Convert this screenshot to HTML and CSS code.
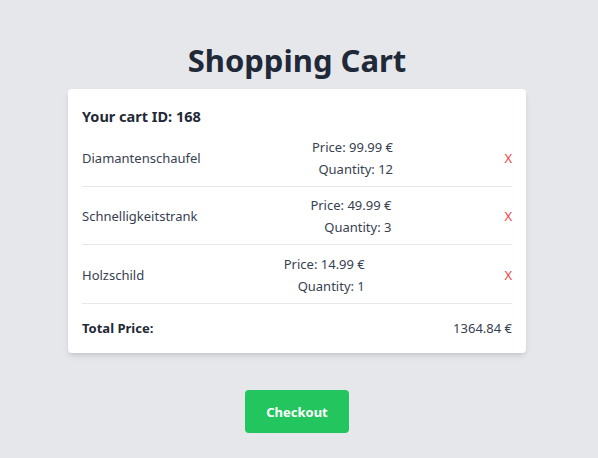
FILE: index.html
```html
<!DOCTYPE html>
<html lang="en">
<head>
<meta charset="utf-8">
<title>Shopping Cart</title>
<link rel="stylesheet" href="styles.css">
</head>
<body>
<main class="page">
  <h1 class="title">Shopping Cart</h1>
  <section class="card">
    <h2 class="cart-id">Your cart ID: 168</h2>
    <ul class="items">
      <li class="item">
        <span class="item-name">Diamantenschaufel</span>
        <div class="item-meta">
          <div>Price: 99.99 €</div>
          <div>Quantity: 12</div>
        </div>
        <button class="remove">X</button>
      </li>
      <li class="item">
        <span class="item-name">Schnelligkeitstrank</span>
        <div class="item-meta">
          <div>Price: 49.99 €</div>
          <div>Quantity: 3</div>
        </div>
        <button class="remove">X</button>
      </li>
      <li class="item">
        <span class="item-name">Holzschild</span>
        <div class="item-meta">
          <div>Price: 14.99 €</div>
          <div>Quantity: 1</div>
        </div>
        <button class="remove">X</button>
      </li>
    </ul>
    <div class="total">
      <span class="total-label">Total Price:</span>
      <span class="total-value">1364.84 €</span>
    </div>
  </section>
  <button class="checkout">Checkout</button>
</main>
</body>
</html>
```

FILE: styles.css
```css
* { box-sizing: border-box; }
html, body { margin: 0; padding: 0; }
body {
  background: #e5e7eb;
  font-family: "Noto Sans", "Open Sans", sans-serif;
  color: #374151;
  font-size: 13px;
}
.page {
  display: flex;
  flex-direction: column;
  align-items: center;
  padding: 40px 4px 0 0;
}
.title {
  margin: 0;
  font-size: 31px;
  line-height: 40px;
  font-weight: 700;
  color: #1f2937;
}
.card {
  margin-top: 9px;
  width: 458px;
  background: #fff;
  border-radius: 4px;
  box-shadow: 0 4px 6px -1px rgba(0,0,0,0.1), 0 2px 4px -2px rgba(0,0,0,0.1);
  padding: 14px;
}
.cart-id {
  margin: 0;
  font-size: 14.5px;
  line-height: 26px;
  font-weight: 700;
  color: #1f2937;
}
.items {
  list-style: none;
  margin: 0;
  padding: 0;
}
.item {
  display: flex;
  justify-content: space-between;
  align-items: center;
  padding: 7px 0 6px;
  border-bottom: 1px solid #e5e7eb;
}
.item:last-child { padding: 8px 0 6px; }
.item-name { line-height: 22px; }
.item-meta {
  text-align: right;
  line-height: 22px;
}
.remove {
  border: 0;
  background: none;
  padding: 0;
  font: inherit;
  color: #ef4444;
  cursor: pointer;
}
.total {
  display: flex;
  justify-content: space-between;
  align-items: center;
  padding-top: 13px;
  line-height: 22px;
}
.total-label { font-weight: 700; color: #1f2937; }
.checkout {
  margin-top: 37px;
  background: #22c55e;
  color: #fff;
  border: 0;
  border-radius: 4px;
  font-family: inherit;
  font-size: 13px;
  font-weight: 700;
  padding: 0 20px;
  height: 43px;
  width: 104px;
  cursor: pointer;
}
```
